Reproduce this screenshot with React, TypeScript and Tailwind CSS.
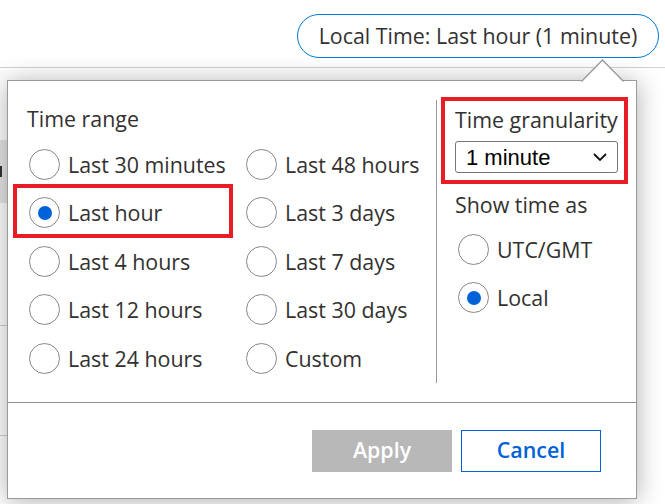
import { useState } from 'react';

const leftOptions = [
  ['Last 30 minutes', 'Last 48 hours'],
  ['Last hour', 'Last 3 days'],
  ['Last 4 hours', 'Last 7 days'],
  ['Last 12 hours', 'Last 30 days'],
  ['Last 24 hours', 'Custom'],
];

const Radio = ({ label, checked, onSelect }: { label: string; checked: boolean; onSelect: () => void }) => (
  <button onClick={onSelect} className="flex items-center gap-[8px] h-[48.5px] text-left">
    <span className="w-[31px] h-[31px] rounded-full border border-[#8a8886] bg-white flex items-center justify-center shrink-0">
      {checked && <span className="w-[14px] h-[14px] rounded-full bg-[#0062d8]" />}
    </span>
    <span className="text-[21.4px] leading-[28px] whitespace-nowrap pt-px">{label}</span>
  </button>
);

const App = () => {
  const [range, setRange] = useState('Last hour');
  const [zone, setZone] = useState('Local');

  return (
    <div className="relative w-[665px] h-[504px] overflow-hidden bg-white font-['Open_Sans',sans-serif] text-[#323130]">
      {/* Top bar */}
      <header className="h-[68px] border-b border-[#d2d2d2] flex justify-end items-start pt-[14px] pr-[6px]">
        <button className="h-[44px] w-[362px] rounded-full border border-[#0078d4] text-[21.4px] leading-[28px] text-[#323130] whitespace-nowrap">
          Local Time: Last hour (1 minute)
        </button>
      </header>

      {/* Page content peeking out behind the popover */}
      <div className="w-[7px] flex flex-col">
        <div className="mt-[72px] h-[63px] bg-[#e6e6e6] flex items-center">
          <span className="w-[2px] h-[11px] bg-[#333]" />
        </div>
        <div className="mt-[122px] h-px bg-[#cfcfcf]" />
        <div className="mt-[109px] h-px bg-[#cfcfcf]" />
      </div>

      {/* Popover */}
      <div className="absolute left-[7px] top-[80px] w-[630px] h-[419px] border border-[#9a9a9a] bg-white shadow-[0_2px_24px_rgba(0,0,0,0.32)] flex flex-col">
        <div className="h-[321px] flex">
          {/* Time range */}
          <div className="w-[428px] pl-[19px] pt-[24px]">
            <div className="text-[21.4px] leading-[28px]">Time range</div>
            <div className="mt-[7px] ml-[2px] grid grid-cols-[217px_1fr]">
              {leftOptions.map(([a, b]) => (
                <div key={a} className="contents">
                  <div className="relative">
                    {a === 'Last hour' && (
                      <div className="absolute left-[-16px] top-[-5px] w-[220px] h-[54px] border-4 border-[#e81c24] pointer-events-none" />
                    )}
                    <Radio label={a} checked={range === a} onSelect={() => setRange(a)} />
                  </div>
                  <Radio label={b} checked={range === b} onSelect={() => setRange(b)} />
                </div>
              ))}
            </div>
          </div>

          <div className="mt-[19px] w-px h-[283px] bg-[#9a9a9a]" />

          {/* Granularity + time zone */}
          <div className="relative flex-1 pl-[18px] pt-[25px]">
            <div className="absolute left-[4px] top-[16px] w-[187px] h-[87px] border-4 border-[#e81c24] pointer-events-none" />
            <div className="text-[21.4px] leading-[28px] whitespace-nowrap">Time granularity</div>
            <div className="mt-[7px] w-[163px] h-[32px] border border-[#767676] rounded-[3px] flex items-center justify-between pl-[10px] pr-[10px] font-['Liberation_Sans',sans-serif] text-[22px] text-black">
              <span>1 minute</span>
              <svg width="14" height="8" viewBox="0 0 14 8" fill="none">
                <path d="M1 1l6 6 6-6" stroke="#111" strokeWidth="1.8" />
              </svg>
            </div>
            <div className="mt-[18px] text-[21.4px] leading-[28px]">Show time as</div>
            <div className="mt-[6px] ml-[3px] flex flex-col">
              <Radio label="UTC/GMT" checked={zone === 'UTC/GMT'} onSelect={() => setZone('UTC/GMT')} />
              <Radio label="Local" checked={zone === 'Local'} onSelect={() => setZone('Local')} />
            </div>
          </div>
        </div>

        <div className="flex-1 border-t border-[#8f8f8f] flex justify-end items-center gap-[9px] pr-[35px]">
          <button disabled className="w-[140px] h-[42px] bg-[#b8b8b8] text-white text-[21.4px] font-semibold">
            Apply
          </button>
          <button className="w-[140px] h-[42px] border border-[#0062d8] text-[#0062d8] text-[21.4px] font-semibold">
            Cancel
          </button>
        </div>
      </div>

      {/* Caret pointing to the pill */}
      <svg className="absolute left-[581px] top-[59px]" width="43" height="23" viewBox="0 0 43 23">
        <polygon points="0,23 21.5,1 43,23" fill="white" />
        <polyline points="0.5,22.5 21.5,1 42.5,22.5" fill="none" stroke="#9a9a9a" strokeWidth="1.3" />
      </svg>
    </div>
  );
};

export default App;
